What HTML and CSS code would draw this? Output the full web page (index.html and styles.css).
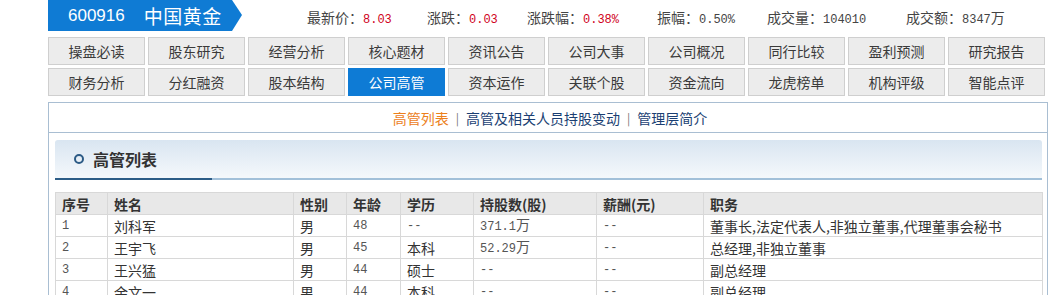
FILE: index.html
```html
<!DOCTYPE html>
<html lang="zh-CN">
<head>
<meta charset="utf-8">
<title>中国黄金 公司高管</title>
<link rel="stylesheet" href="styles.css">
</head>
<body>
<div class="page">
  <div class="top">
    <div class="badge"><span class="code">600916</span><span class="name">中国黄金</span></div>
    <div class="stats">
      <span class="stat"><span class="lbl">最新价：</span><span class="val red">8.03</span></span>
      <span class="stat"><span class="lbl">涨跌：</span><span class="val red">0.03</span></span>
      <span class="stat"><span class="lbl">涨跌幅：</span><span class="val red">0.38%</span></span>
      <span class="stat"><span class="lbl">振幅：</span><span class="val">0.50%</span></span>
      <span class="stat"><span class="lbl">成交量：</span><span class="val">104010</span></span>
      <span class="stat"><span class="lbl">成交额：</span><span class="val">8347</span><span class="unit">万</span></span>
    </div>
  </div>

  <div class="nav">
    <a class="btn">操盘必读</a>
    <a class="btn">股东研究</a>
    <a class="btn">经营分析</a>
    <a class="btn">核心题材</a>
    <a class="btn">资讯公告</a>
    <a class="btn">公司大事</a>
    <a class="btn">公司概况</a>
    <a class="btn">同行比较</a>
    <a class="btn">盈利预测</a>
    <a class="btn">研究报告</a>
    <a class="btn">财务分析</a>
    <a class="btn">分红融资</a>
    <a class="btn">股本结构</a>
    <a class="btn active">公司高管</a>
    <a class="btn">资本运作</a>
    <a class="btn">关联个股</a>
    <a class="btn">资金流向</a>
    <a class="btn">龙虎榜单</a>
    <a class="btn">机构评级</a>
    <a class="btn">智能点评</a>
  </div>

  <div class="panel">
    <div class="subnav">
      <a class="sublink current">高管列表</a>
      <span class="sep">|</span>
      <a class="sublink">高管及相关人员持股变动</a>
      <span class="sep">|</span>
      <a class="sublink">管理层简介</a>
    </div>

    <div class="section">
      <div class="sec-head"><span class="dot"></span><span class="sec-title">高管列表</span></div>
      <table class="grid">
        <colgroup>
          <col class="c1"><col class="c2"><col class="c3"><col class="c4"><col class="c5"><col class="c6"><col class="c7"><col class="c8">
        </colgroup>
        <thead>
          <tr><th>序号</th><th>姓名</th><th>性别</th><th>年龄</th><th>学历</th><th>持股数(股)</th><th>薪酬(元)</th><th>职务</th></tr>
        </thead>
        <tbody>
          <tr><td class="num">1</td><td>刘科军</td><td>男</td><td class="num">48</td><td class="num">--</td><td class="num">371.1<span class="cjk">万</span></td><td class="num">--</td><td>董事长,法定代表人,非独立董事,代理董事会秘书</td></tr>
          <tr><td class="num">2</td><td>王宇飞</td><td>男</td><td class="num">45</td><td>本科</td><td class="num">52.29<span class="cjk">万</span></td><td class="num">--</td><td>总经理,非独立董事</td></tr>
          <tr><td class="num">3</td><td>王兴猛</td><td>男</td><td class="num">44</td><td>硕士</td><td class="num">--</td><td class="num">--</td><td>副总经理</td></tr>
          <tr><td class="num">4</td><td>余文一</td><td>男</td><td class="num">44</td><td>本科</td><td class="num">--</td><td class="num">--</td><td>副总经理</td></tr>
        </tbody>
      </table>
    </div>
  </div>
</div>
</body>
</html>
```

FILE: styles.css
```css
html {
  overflow: hidden;
}
body {
  margin: 0;
  background: #ffffff;
  font-family: "Noto Sans CJK SC", "Noto Sans", sans-serif;
  color: #333333;
}
.page {
  margin-left: 48px;
  width: 1000px;
}

/* top bar */
.top {
  display: flex;
  align-items: center;
  height: 31px;
}
.badge {
  flex: none;
  width: 194px;
  height: 31px;
  background: #0f7bd4;
  clip-path: polygon(0 0, 184px 0, 194px 15px, 184px 31px, 0 31px);
  display: flex;
  align-items: center;
  padding-left: 20px;
  box-sizing: border-box;
  color: #ffffff;
}
.code {
  font-family: "Liberation Sans", sans-serif;
  font-size: 17px;
  margin-right: 19px;
}
.name {
  font-size: 19px;
  letter-spacing: 0.5px;
}
.stats {
  flex: none;
  margin-left: 65px;
  display: grid;
  grid-template-columns: 120px 100px 130px 110px 139px auto;
  align-items: center;
  padding-top: 2px;
}
.stat {
  display: flex;
  align-items: baseline;
  white-space: nowrap;
}
.lbl {
  font-size: 14px;
  color: #444444;
}
.val {
  font-family: "Liberation Mono", monospace;
  font-size: 12px;
  color: #444444;
}
.val.red {
  color: #d0021b;
}
.unit {
  font-size: 14px;
  color: #444444;
}

/* nav buttons */
.nav {
  margin-top: 6px;
  display: grid;
  grid-template-columns: repeat(10, 97px);
  grid-auto-rows: 28px;
  column-gap: 3px;
  row-gap: 3px;
}
.btn {
  display: flex;
  align-items: center;
  justify-content: center;
  background: #ececec;
  border: 1px solid #cfcfcf;
  font-size: 14px;
  color: #3a3a3a;
}
.btn.active {
  background: #0e7bd5;
  border-color: #0e7bd5;
  color: #ffffff;
}

/* panel */
.panel {
  margin-top: 6px;
  border: 1px solid #a9bed2;
  border-bottom: none;
  padding-bottom: 20px;
}
.subnav {
  height: 29px;
  border-bottom: 1px solid #a9bed2;
  display: flex;
  align-items: center;
  justify-content: center;
  padding-left: 4px;
  font-size: 14px;
}
.sublink {
  color: #1b3f73;
}
.sublink.current {
  color: #ec801c;
}
.sep {
  color: #777777;
  font-size: 12px;
  margin: 0 7px;
}
.section {
  padding: 7px 5px 0 6px;
}
.sec-head {
  height: 40px;
  box-sizing: border-box;
  padding-bottom: 2px;
  border-radius: 3px 3px 0 0;
  display: flex;
  align-items: center;
  padding-left: 19px;
  background:
    linear-gradient(#2d5d87, #2d5d87) left bottom / 157px 2px no-repeat,
    linear-gradient(#a2c0d9, #a2c0d9) left bottom / 100% 2px no-repeat,
    linear-gradient(to bottom, #d9e5f1, #f6f9fc);
}
.dot {
  width: 6px;
  height: 6px;
  border: 2px solid #2b5a85;
  border-radius: 50%;
  margin-right: 9px;
}
.sec-title {
  font-size: 16px;
  font-weight: bold;
  color: #333333;
}

/* table */
.grid {
  margin-top: 12px;
  width: 987px;
  border-collapse: collapse;
  table-layout: fixed;
}
.c1 { width: 52px; }
.c2 { width: 186px; }
.c3 { width: 53px; }
.c4 { width: 54px; }
.c5 { width: 73px; }
.c6 { width: 123px; }
.c7 { width: 107px; }
.c8 { width: 339px; }
.grid tr {
  height: 22px;
}
.grid th,
.grid td {
  height: 21px;
  padding: 0 6px;
  border: 1px solid #d8d8d8;
  text-align: left;
  vertical-align: middle;
  white-space: nowrap;
  overflow: hidden;
  line-height: 16px;
}
.grid th {
  background: #e8e8e8;
  font-size: 14px;
  font-weight: bold;
  color: #333333;
}
.grid td {
  font-size: 14px;
  color: #333333;
}
.grid td.num {
  font-family: "Liberation Mono", monospace;
  font-size: 12px;
  color: #555555;
}
.cjk {
  font-family: "Noto Sans CJK SC", sans-serif;
  font-size: 14px;
  line-height: 14px;
}
```
